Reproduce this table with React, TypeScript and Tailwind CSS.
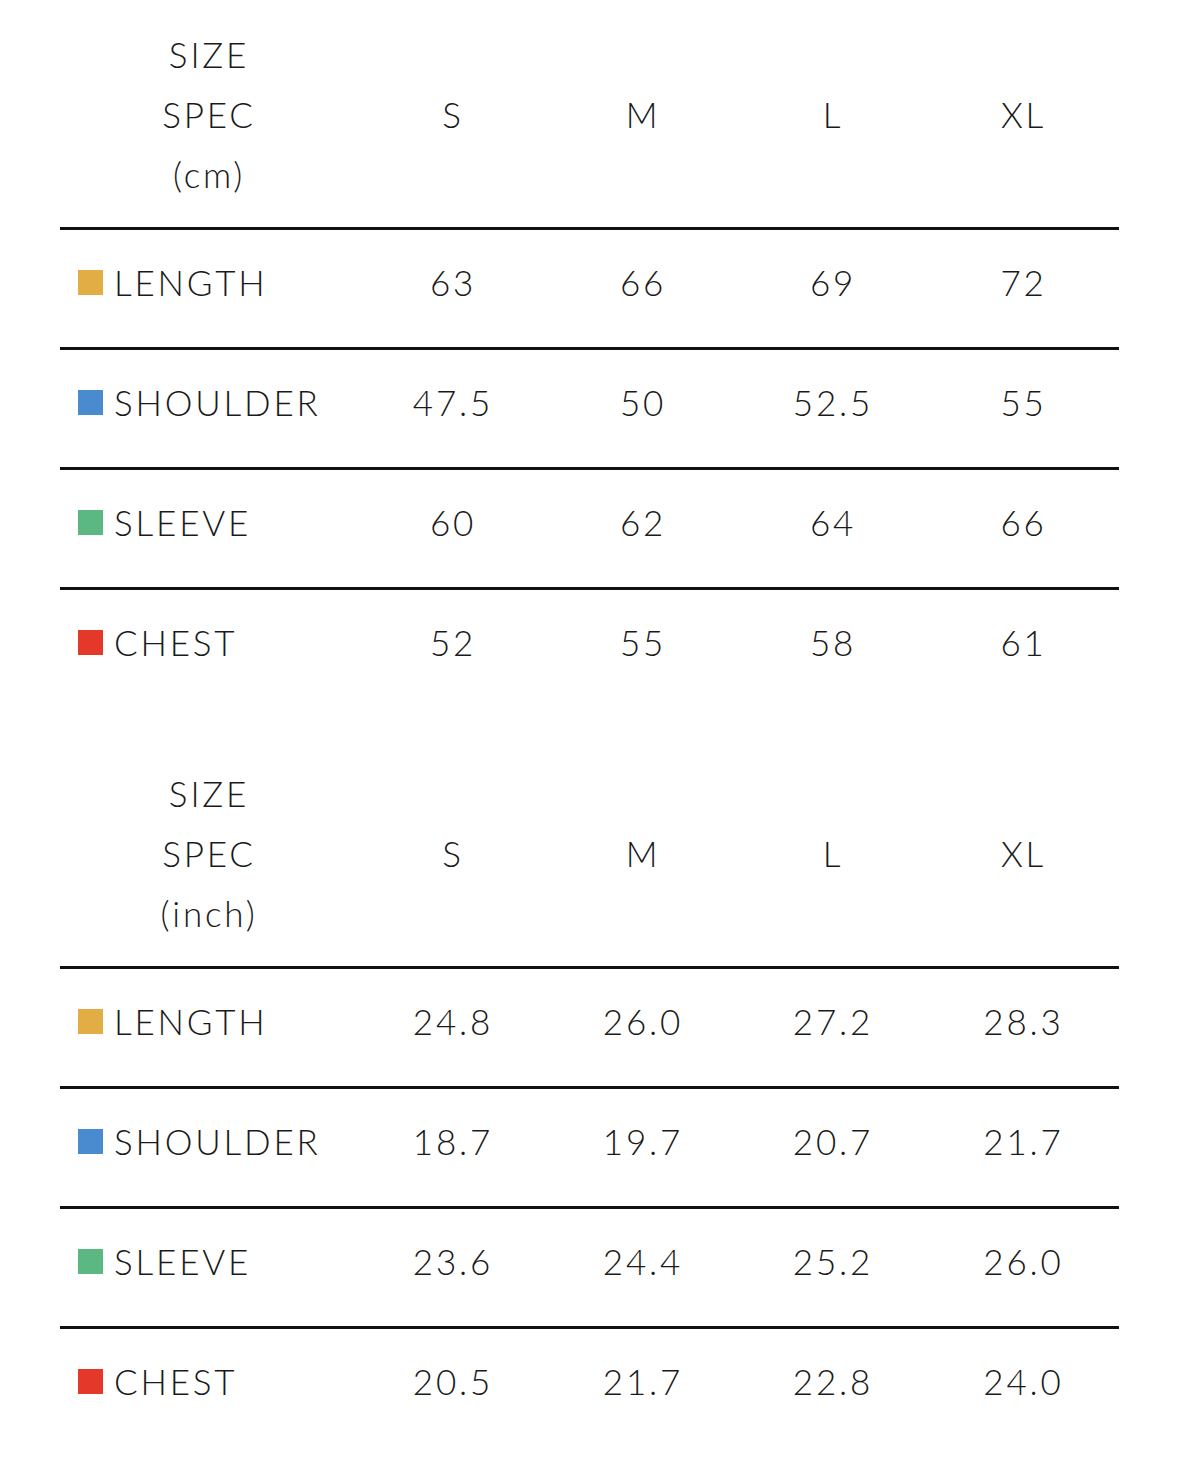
import React from "react";

type Row = { label: string; color: string; values: string[] };

const sizes = ["S", "M", "L", "XL"];

const cmRows: Row[] = [
  { label: "LENGTH", color: "bg-[#e1ad44]", values: ["63", "66", "69", "72"] },
  { label: "SHOULDER", color: "bg-[#4a8bd0]", values: ["47.5", "50", "52.5", "55"] },
  { label: "SLEEVE", color: "bg-[#5bb883]", values: ["60", "62", "64", "66"] },
  { label: "CHEST", color: "bg-[#e3382a]", values: ["52", "55", "58", "61"] },
];

const inchRows: Row[] = [
  { label: "LENGTH", color: "bg-[#e1ad44]", values: ["24.8", "26.0", "27.2", "28.3"] },
  { label: "SHOULDER", color: "bg-[#4a8bd0]", values: ["18.7", "19.7", "20.7", "21.7"] },
  { label: "SLEEVE", color: "bg-[#5bb883]", values: ["23.6", "24.4", "25.2", "26.0"] },
  { label: "CHEST", color: "bg-[#e3382a]", values: ["20.5", "21.7", "22.8", "24.0"] },
];

function Table({ unit, rows }: { unit: string; rows: Row[] }) {
  return (
    <div className="flex flex-col">
      <div className="grid grid-cols-[298px_190px_190px_190px_1fr] pt-[24px] pb-[23px]">
        <div className="flex flex-col items-center leading-[60px]">
          <span>SIZE</span>
          <span>SPEC</span>
          <span>({unit})</span>
        </div>
        {sizes.map((s) => (
          <div key={s} className="flex items-center justify-center leading-[60px]">
            {s}
          </div>
        ))}
      </div>
      {rows.map((r) => (
        <div
          key={r.label}
          className="grid grid-cols-[298px_190px_190px_190px_1fr] border-t-[3px] border-[#111111] h-[120px] pt-[22px]"
        >
          <div className="flex items-center h-[60px] pl-[18px] gap-[11px]">
            <span className={`w-[25px] h-[25px] ${r.color}`} />
            <span>{r.label}</span>
          </div>
          {r.values.map((v, i) => (
            <div key={i} className="flex items-center justify-center h-[60px]">
              {v}
            </div>
          ))}
        </div>
      ))}
    </div>
  );
}

export default function App() {
  return (
    <div
      className="w-[1179px] h-[1481px] bg-white text-[#1a1a1a] text-[35px] font-light tracking-[0.08em] pl-[60px]"
      style={{ fontFamily: "Lato, 'Noto Sans', sans-serif" }}
    >
      <div className="w-[1059px] flex flex-col gap-[32px]">
        <Table unit="cm" rows={cmRows} />
        <Table unit="inch" rows={inchRows} />
      </div>
    </div>
  );
}
